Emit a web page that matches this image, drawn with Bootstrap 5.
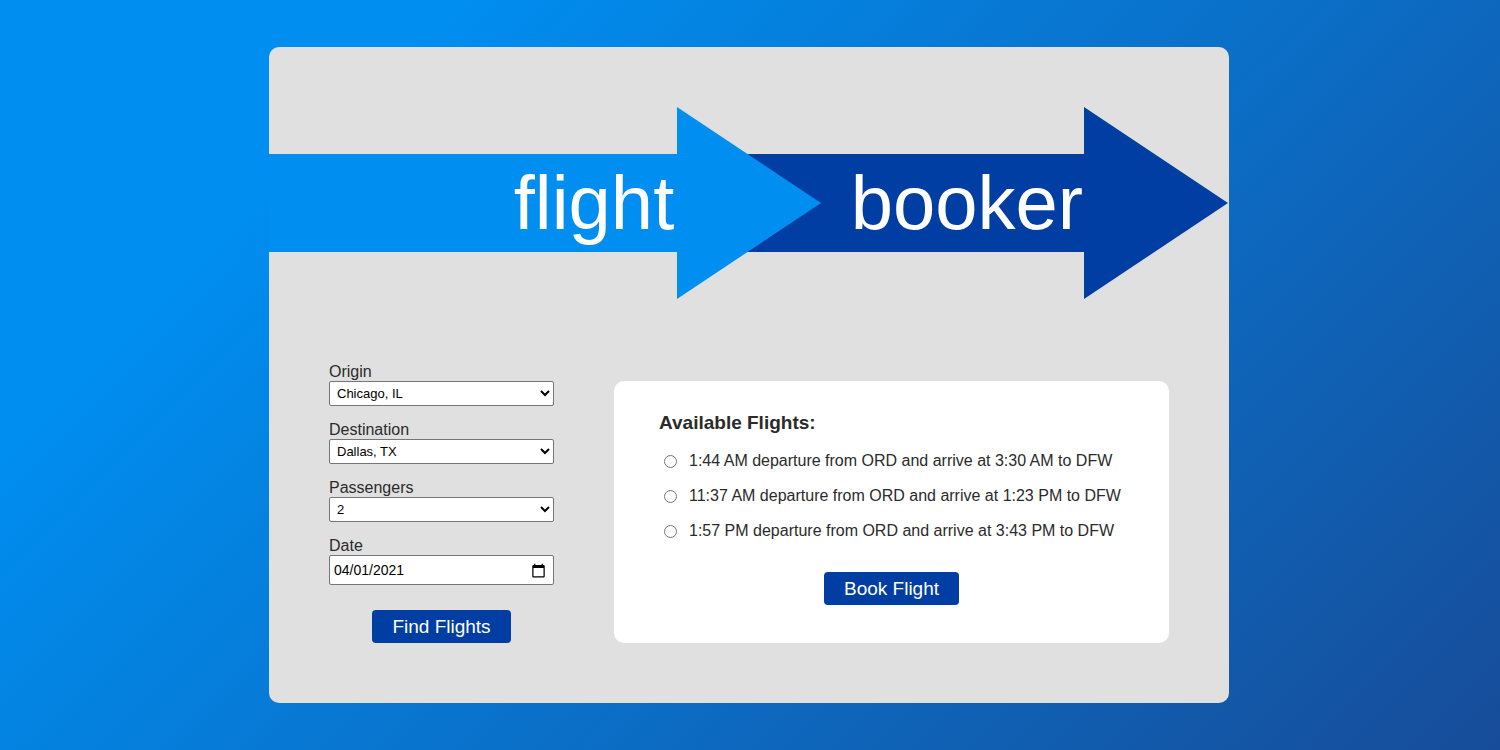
<!DOCTYPE html>
<html lang="en">
<head>
<meta charset="utf-8">
<meta name="viewport" content="width=device-width, initial-scale=1">
<title>Flight Booker</title>
<link href="https://cdn.jsdelivr.net/npm/bootstrap@5.3.0/dist/css/bootstrap.min.css" rel="stylesheet">
<style>
  :root { --sky: #008ef0; --navy: #003ea3; --ink: #2b2b2b; }
  body {
    font-family: "Liberation Sans", Arial, sans-serif;
    font-size: 16px;
    line-height: 18px;
    color: var(--ink);
    padding-right: 2px;
    background: linear-gradient(135deg, var(--sky) 20%, #174c99 100%) no-repeat fixed;
  }
  .booker-shell { max-width: 960px; padding: 60px 0; background: #e0e0e0; border-radius: 10px; }
  .logo-word { font-size: 76px; fill: #fff; text-anchor: middle; }
  .booker-body { gap: 60px; padding: 64px 60px 0; }
  .search-form { flex: 0 0 225px; }
  .field-box {
    height: 25px;
    font-size: 13px;
    color: #000;
    background-color: #fff;
    border: 1px solid #767676;
    border-radius: 2px;
    padding: 0 3px;
  }
  .field-date { height: 30px; padding: 0 4px; font-size: 14px; }
  .field-date::-webkit-calendar-picker-indicator { width: 15px; height: 15px; padding: 0 3px; background-size: 15px 15px; }
  .field-group { margin-bottom: 15px; }
  .search-action { padding-top: 25px; }
  .btn-booker {
    --bs-btn-color: #fff;
    --bs-btn-bg: var(--navy);
    --bs-btn-hover-color: #fff;
    --bs-btn-hover-bg: #00338a;
    --bs-btn-border-width: 0;
    --bs-btn-border-radius: 4px;
    --bs-btn-padding-x: 20px;
    --bs-btn-padding-y: 5px;
    --bs-btn-font-size: 19px;
    --bs-btn-line-height: 23px;
  }
  .results { padding: 30px 45px 38px; background: #fff; border-radius: 10px; }
  .results h2 { font-size: 19px; line-height: 24px; font-weight: 700; margin-bottom: 17px; }
  .flight-option { gap: 12px; margin-bottom: 17px; padding-left: 5px; }
  .flight-option input { width: 13px; height: 13px; flex: none; }
  .results-action { padding-top: 15px; }
</style>
</head>
<body class="min-vh-100 d-flex align-items-center">
<main class="booker-shell container-fluid">
  <svg class="d-block w-100" viewBox="0 0 960 192" role="img" aria-label="flight booker">
    <path fill="#003ea3" d="M470 47H815V0L959 96L815 192V145H470Z"/>
    <path fill="#008ef0" d="M0 47H408V0L552 96L408 192V145H0Z"/>
    <text class="logo-word" x="325" y="122">flight</text>
    <text class="logo-word" x="698" y="122">booker</text>
  </svg>
  <div class="booker-body d-flex flex-column flex-md-row align-items-md-end">
    <form class="search-form">
      <div class="field-group">
        <label class="d-block" for="origin">Origin</label>
        <select class="field-box d-block w-100" id="origin"><option>Chicago, IL</option><option>Dallas, TX</option></select>
      </div>
      <div class="field-group">
        <label class="d-block" for="destination">Destination</label>
        <select class="field-box d-block w-100" id="destination"><option>Dallas, TX</option><option>Chicago, IL</option></select>
      </div>
      <div class="field-group">
        <label class="d-block" for="passengers">Passengers</label>
        <select class="field-box d-block w-100" id="passengers"><option>1</option><option selected>2</option><option>3</option><option>4</option></select>
      </div>
      <label class="d-block" for="date">Date</label>
      <input class="field-box field-date d-block w-100" type="date" id="date" value="2021-04-01">
      <div class="search-action text-center"><button class="btn btn-booker" type="button">Find Flights</button></div>
    </form>
    <form class="results flex-grow-1">
      <h2>Available Flights:</h2>
      <div class="flight-option d-flex align-items-center"><input type="radio" name="flight" id="f1"><label for="f1">1:44 AM departure from ORD and arrive at 3:30 AM to DFW</label></div>
      <div class="flight-option d-flex align-items-center"><input type="radio" name="flight" id="f2"><label for="f2">11:37 AM departure from ORD and arrive at 1:23 PM to DFW</label></div>
      <div class="flight-option d-flex align-items-center"><input type="radio" name="flight" id="f3"><label for="f3">1:57 PM departure from ORD and arrive at 3:43 PM to DFW</label></div>
      <div class="results-action text-center"><button class="btn btn-booker" type="button">Book Flight</button></div>
    </form>
  </div>
</main>
<script src="https://cdn.jsdelivr.net/npm/bootstrap@5.3.0/dist/js/bootstrap.bundle.min.js"></script>
</body>
</html>
